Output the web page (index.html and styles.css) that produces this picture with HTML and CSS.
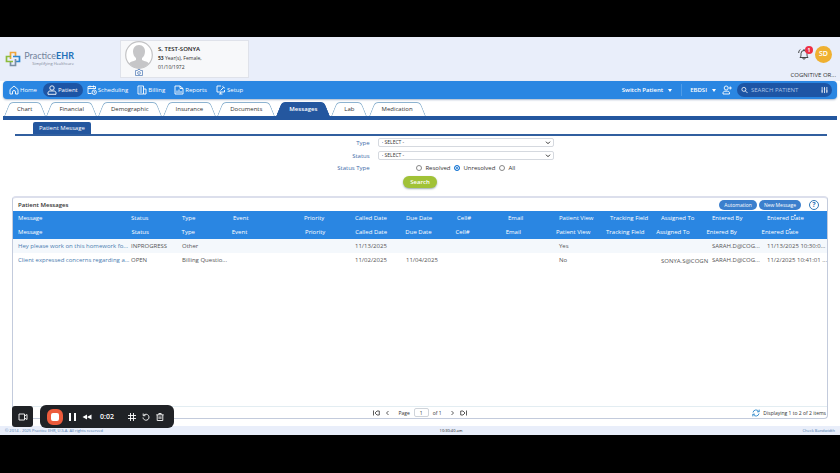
FILE: index.html
```html
<!DOCTYPE html>
<html lang="en">
<head>
    <meta charset="UTF-8">
    <meta name="viewport" content="width=device-width, initial-scale=1.0">
    <title>Practice EHR - Patient Messages</title>
    <link rel="stylesheet" href="styles.css">
</head>
<body>
    <div class="app">
        <header class="header">
            <a href="#" class="logo">
                <svg class="logo-mark" viewBox="0 0 16 16" fill="none" stroke-width="1.7">
                    <path d="M5.5 8V1.500h5V6" stroke="#f0a63a"/>
                    <path d="M8 5.500h6.500v5H10" stroke="#2d86cf"/>
                    <path d="M10.500 8v6.500h-5V10" stroke="#7b8fa3"/>
                    <path d="M8 10.500H1.500v-5H6" stroke="#8dbb3c"/>
                </svg>
                <span class="logo-text">
                    <span class="logo-name">Practice<b>EHR</b></span>
                    <span class="logo-tag">Simplifying Healthcare</span>
                </span>
            </a>
            <div class="patient-card">
                <div class="photo">
                    <svg class="avatar" viewBox="0 0 28 28">
                        <circle cx="14" cy="14" r="13.300" fill="#fff" stroke="#c3c3c5" stroke-width="1.200"/>
                        <path d="M14 4c4 0 6 3 6 6.500 0 2.500-1 5-3 6.500v2c3 1.500 5.500 1.500 7 3.500a13 13 0 0 1-20 0c1.500-2 4-2 7-3.500v-2c-2-1.500-3-4-3-6.500C8 7 10 4 14 4z" fill="#c6c6c8"/>
                    </svg>
                    <svg class="camera" viewBox="0 0 8 7" fill="none" stroke="#5f87bd" stroke-width=".8">
                        <path d="M.5 1.500h2l.5-1h2l.5 1h2v5h-7z"/>
                        <circle cx="4" cy="4" r="1.400"/>
                    </svg>
                </div>
                <div class="patient-info">
                    <div class="patient-name">S, TEST-SONYA</div>
                    <div><b>53</b> Year(s), Female,</div>
                    <div>01/10/1972</div>
                </div>
            </div>
            <div class="account">
                <div class="account-icons">
                    <button type="button" class="bell" aria-label="Notifications">
                        <svg viewBox="0 0 12 12" fill="none" stroke="#333" stroke-width=".9">
                            <path d="M2 9.500c1-1 1-2 1-4a3 3 0 0 1 6 0c0 2 0 3 1 4zM4.700 10c.3 1.600 2.300 1.600 2.600 0M6 2.500V1M.7 5c0-1.500.5-2.500 1.500-3.500"/>
                        </svg>
                        <span class="badge">1</span>
                    </button>
                    <button type="button" class="user">SD</button>
                </div>
                <div class="company">COGNITIVE OR...</div>
            </div>
        </header>

        <nav class="navbar">
            <a href="#" class="nav-item">
                <svg viewBox="0 0 10 10"><path d="M1 4.500L5 1l4 3.500V9H6.500V7a1.500 1.500 0 0 0-3 0v2H1z"/></svg>Home
            </a>
            <a href="#" class="nav-item active">
                <svg viewBox="0 0 10 10"><circle cx="5" cy="3" r="2.200"/><path d="M1 9.300V8c0-1.300 1-2 2-2h4c1 0 2 .7 2 2v1.300z"/></svg>Patient
            </a>
            <a href="#" class="nav-item">
                <svg viewBox="0 0 10 10"><path d="M4.500 8.500H1v-7h7.500V4M1 3.500h7.500M3 .5v2M6.500.5v2"/><circle cx="7.200" cy="7.200" r="2.200"/><path d="M7.200 6v1.300h1"/></svg>Scheduling
            </a>
            <a href="#" class="nav-item">
                <svg viewBox="0 0 10 10"><path d="M1 1h5.500v8H1zM6.500 4H9v5H6.500M2.500 3h2.500M2.500 5h2.500M2.500 7h2.500"/></svg>Billing
            </a>
            <a href="#" class="nav-item">
                <svg viewBox="0 0 10 10"><path d="M1 1h5l3 2.500V9H1zM6 1v2.500h3M3 8V5.500M5 8V4.500M7 8V6"/></svg>Reports
            </a>
            <a href="#" class="nav-item">
                <svg viewBox="0 0 10 10"><path d="M5 1H1v6h7.500V5M3 9h3.500M4.700 7v2M4.500 5.500l3-3M7 .8a1.500 1.500 0 0 0 2 2"/></svg>Setup
            </a>
            <div class="nav-right">
                <button type="button" class="switch">Switch Patient <span class="caret"></span></button>
                <button type="button" class="practice">EBDSI <span class="caret"></span></button>
                <button type="button" class="add-user" aria-label="Add patient">
                    <svg viewBox="0 0 10 10"><circle cx="4.200" cy="3" r="2"/><path d="M1 9V8c0-1.200 1-1.800 2-1.800h2.500c1 0 2 .6 2 1.800v1zM8.300 1.500v3M6.800 3h3"/></svg>
                </button>
                <label class="search">
                    <svg viewBox="0 0 8 8"><circle cx="3.300" cy="3.300" r="2.300"/><path d="M5 5l2.500 2.500"/></svg>
                    <input type="text" placeholder="SEARCH PATIENT" aria-label="Search patient">
                    <svg viewBox="0 0 8 8"><path d="M1.300 .5v7M4 .5v7M6.700 .5v7M.5 5.200h1.600M3.200 2.800h1.600M5.900 5.200h1.600"/></svg>
                </label>
            </div>
        </nav>

        <nav class="tabs">
            <a href="#" class="tab"><span>Chart</span></a>
            <a href="#" class="tab"><span>Financial</span></a>
            <a href="#" class="tab"><span>Demographic</span></a>
            <a href="#" class="tab"><span>Insurance</span></a>
            <a href="#" class="tab"><span>Documents</span></a>
            <a href="#" class="tab selected"><span>Messages</span></a>
            <a href="#" class="tab"><span>Lab</span></a>
            <a href="#" class="tab"><span>Medication</span></a>
        </nav>

        <div class="subtabs">
            <a href="#" class="subtab">Patient Message</a>
        </div>

        <form class="filter">
            <label for="type">Type</label>
            <select id="type"><option>- SELECT -</option></select>
            <label for="status">Status</label>
            <select id="status"><option>- SELECT -</option></select>
            <span class="label">Status Type</span>
            <div class="radios">
                <label><input type="radio" name="statusType">Resolved</label>
                <label><input type="radio" name="statusType" checked>Unresolved</label>
                <label><input type="radio" name="statusType">All</label>
            </div>
            <button type="button" class="search-button">Search</button>
        </form>

        <main class="panel">
            <div class="panel-title">
                <h1>Patient Messages</h1>
                <button type="button" class="pill">Automation</button>
                <button type="button" class="pill">New Message</button>
                <button type="button" class="help" aria-label="Help">?</button>
            </div>

            <table class="grid grid-head">
                <colgroup>
                    <col class="w-message"><col class="w-col"><col class="w-col"><col class="w-event"><col class="w-col"><col class="w-col"><col class="w-col"><col class="w-col"><col class="w-col"><col class="w-col"><col class="w-col"><col class="w-col"><col class="w-by"><col class="w-date">
                </colgroup>
                <tr>
                    <th>Message</th><th>Status</th><th>Type</th><th>Event</th><th>Priority</th><th>Called Date</th><th>Due Date</th><th>Cell#</th><th>Email</th><th>Patient View</th><th>Tracking Field</th><th>Assigned To</th><th>Entered By</th><th class="sorted">Entered Date</th>
                </tr>
            </table>
            <table class="grid grid-head grid-scroll">
                <colgroup>
                    <col class="w-message"><col class="w-col"><col class="w-col"><col class="w-event"><col class="w-col"><col class="w-col"><col class="w-col"><col class="w-col"><col class="w-col"><col class="w-col"><col class="w-col"><col class="w-col"><col class="w-by"><col class="w-date">
                </colgroup>
                <tr>
                    <th>Message</th><th>Status</th><th>Type</th><th>Event</th><th>Priority</th><th>Called Date</th><th>Due Date</th><th>Cell#</th><th>Email</th><th>Patient View</th><th>Tracking Field</th><th>Assigned To</th><th>Entered By</th><th class="sorted">Entered Date</th>
                </tr>
            </table>
            <table class="grid grid-body">
                <colgroup>
                    <col class="w-message"><col class="w-col"><col class="w-col"><col class="w-event"><col class="w-col"><col class="w-col"><col class="w-col"><col class="w-col"><col class="w-col"><col class="w-col"><col class="w-col"><col class="w-col"><col class="w-by"><col class="w-date">
                </colgroup>
                <tr>
                    <td><a href="#">Hey please work on this homework fo...</a></td><td>INPROGRESS</td><td>Other</td><td></td><td></td><td>11/13/2025</td><td></td><td></td><td></td><td>Yes</td><td></td><td></td><td>SARAH.D@COG...</td><td>11/13/2025 10:30:0...</td>
                </tr>
                <tr>
                    <td><a href="#">Client expressed concerns regarding a...</a></td><td>OPEN</td><td>Billing Questio...</td><td></td><td></td><td>11/02/2025</td><td>11/04/2025</td><td></td><td></td><td>No</td><td></td><td class="assigned">SONYA.S@COGN</td><td>SARAH.D@COG...</td><td>11/2/2025 10:41:01 ...</td>
                </tr>
            </table>

            <div class="pager">
                <div class="pages">
                    <button type="button" aria-label="First page"><svg viewBox="0 0 7 6"><path d="M.5.500v5M4 1L2 3l2 2M4 1h2.300v4H4"/></svg></button>
                    <button type="button" aria-label="Previous page"><svg viewBox="0 0 7 6"><path d="M4.500 1l-2 2 2 2"/></svg></button>
                    <label for="page">Page</label>
                    <input type="text" id="page" value="1">
                    <span>of 1</span>
                    <button type="button" aria-label="Next page"><svg viewBox="0 0 7 6"><path d="M2.500 1l2 2-2 2"/></svg></button>
                    <button type="button" aria-label="Last page"><svg viewBox="0 0 7 6"><path d="M6.500.500v5M3 1l2 2-2 2M3 1H.7v4H3"/></svg></button>
                </div>
                <div class="count">
                    <svg viewBox="0 0 8 8"><path d="M1 3.500A3.100 3.100 0 0 1 6.800 2.600M7.200.600v2.200H5M7 4.500A3.100 3.100 0 0 1 1.200 5.400M.8 7.400V5.200H3"/></svg>
                    Displaying 1 to 2 of 2 items
                </div>
            </div>
        </main>

        <footer class="footer">
            <span>© 2014 - 2025 Practice EHR, U.S.A. All rights reserved</span>
            <span class="clock">10:30:40 am</span>
            <a href="#">Check Bandwidth</a>
        </footer>
    </div>

    <div class="recorder">
        <button type="button" class="rec-camera" aria-label="Camera">
            <svg viewBox="0 0 10 8"><path d="M1 1h5.500v6H1zM6.500 3L9 1.500v5L6.500 5"/></svg>
        </button>
        <div class="rec-bar">
            <button type="button" class="rec-stop" aria-label="Stop"></button>
            <button type="button" class="rec-pause" aria-label="Pause"></button>
            <button type="button" aria-label="Rewind"><svg class="solid" viewBox="0 0 9 8"><path d="M4.500 1.500v5L0 4zM9 1.500v5L4.500 4z"/></svg></button>
            <span class="rec-time">0:02</span>
            <button type="button" aria-label="Grid"><svg viewBox="0 0 8 8"><path d="M2.500 0v8M5.500 0v8M0 2.500h8M0 5.500h8"/></svg></button>
            <button type="button" aria-label="Restart"><svg viewBox="0 0 8 8"><path d="M1.800 2.200A3 3 0 1 1 1 4.500M1.200.500v2.200h2.200"/></svg></button>
            <button type="button" aria-label="Delete"><svg viewBox="0 0 8 8"><path d="M.3 1.800h7.400M2.800 1.500V.500h2.400v1M1.200 2v5.500h5.600V2M3.100 3.300v2.700M4.900 3.300v2.700"/></svg></button>
        </div>
    </div>
</body>
</html>
```

FILE: styles.css
```css
* {
    box-sizing: border-box;
}
body {
    margin: 0;
    height: 100vh;
    padding: 37px 0 38px;
    background-color: #000;
    color: #333;
    font-family: "Open Sans", "Noto Sans", sans-serif;
    font-size: 6px;
    line-height: 8px;
}
button, input, select {
    font: inherit;
    color: inherit;
    margin: 0;
    padding: 0;
    border: none;
    background: none;
}
button {
    display: flex;
    align-items: center;
    justify-content: center;
    cursor: pointer;
}
a {
    color: inherit;
    text-decoration: none;
}
svg {
    flex: none;
}
.app {
    display: flex;
    flex-direction: column;
    height: 100%;
    background-color: #fff;
}

/* Header */
.header {
    display: flex;
    align-items: center;
    height: 44px;
    padding: 0 4px 0 5px;
    background-color: #e9eefa;
}
.logo {
    display: flex;
    align-items: center;
    width: 115px;
}
.logo-mark {
    width: 16px;
    height: 16px;
}
.logo-text {
    display: flex;
    flex-direction: column;
    align-items: flex-end;
    width: 53px;
}
.logo-name {
    color: #72829a;
    font-family: Lato, sans-serif;
    font-size: 9px;
    line-height: 10px;
    white-space: nowrap;
}
.logo-name b {
    color: #2271b8;
}
.logo-tag {
    color: #7d8696;
    font-size: 4px;
    line-height: 6px;
    white-space: nowrap;
}
.patient-card {
    display: flex;
    width: 129px;
    height: 38px;
    padding: 0 4px;
    gap: 5px;
    background-color: #f7f8fa;
    border: 1px solid #dfe2ea;
}
.photo {
    display: flex;
    flex-direction: column;
    align-items: center;
}
.avatar {
    width: 28px;
    height: 28px;
}
.camera {
    width: 8px;
    height: 7px;
}
.patient-info {
    padding-top: 4px;
    font-size: 5px;
    line-height: 9px;
}
.patient-name {
    color: #222;
    font-size: 6px;
    font-weight: 600;
}
.account {
    display: flex;
    flex-direction: column;
    align-items: flex-end;
    gap: 8px;
    margin-left: auto;
    padding-top: 6px;
}
.account-icons {
    display: flex;
    align-items: center;
    gap: 2px;
    padding-right: 4px;
}
.bell {
    position: relative;
    width: 15px;
    height: 12px;
    justify-content: flex-start;
}
.bell svg {
    width: 12px;
    height: 12px;
}
.badge {
    position: absolute;
    top: -2px;
    right: 0;
    width: 8px;
    height: 8px;
    border-radius: 50%;
    background-color: #ee2f45;
    color: #fff;
    font-size: 5px;
    font-weight: bold;
}
.user {
    width: 17px;
    height: 17px;
    border-radius: 50%;
    background-color: #efb031;
    color: #fff;
    font-size: 7px;
    font-weight: 600;
}

/* Main navigation */
.navbar {
    display: flex;
    align-items: center;
    height: 18px;
    margin: 0 3px;
    padding: 0 5px 0 2px;
    border-radius: 4px;
    background-color: #2a86e2;
    color: #fff;
    box-shadow: 0 1px 2px #aab8cc;
}
.navbar svg {
    fill: none;
    stroke: #fff;
    stroke-width: 0.9;
}
.nav-item {
    display: flex;
    align-items: center;
    height: 14px;
    padding: 0 5px 0 4px;
    gap: 1px;
    border-radius: 7px;
}
.nav-item svg,
.add-user svg {
    width: 10px;
    height: 10px;
}
.nav-item.active {
    margin-left: 1px;
    background-color: #1d55a5;
}
.nav-right {
    display: flex;
    align-items: center;
    margin-left: auto;
}
.switch,
.practice {
    gap: 5px;
    height: 12px;
    font-weight: 600;
}
.switch {
    padding-right: 9px;
    border-right: 1px solid #4f9ce8;
}
.practice {
    padding: 0 6px 0 8px;
}
.caret {
    border: 2px solid transparent;
    border-top: 3px solid #fff;
    border-bottom: none;
}
.search {
    display: flex;
    align-items: center;
    gap: 3px;
    width: 95px;
    height: 14px;
    margin-left: 5px;
    padding: 0 4px;
    border-radius: 7px;
    background-color: #1d55a5;
}
.search svg {
    width: 7px;
    height: 8px;
}
.search input {
    flex: 1;
    min-width: 0;
    height: 8px;
}
.search input::placeholder {
    color: #a9c4e8;
}

/* Chart tabs */
.tabs {
    display: flex;
    gap: 3px;
    margin: 3px 3px 0;
    padding: 0 2px;
    border-bottom: 4px solid #24579f;
}
.tab {
    position: relative;
    height: 14px;
    padding: 0 12px;
    line-height: 14px;
}
.tab span {
    position: relative;
    z-index: 1;
}
.tab::before,
.tab::after {
    content: "";
    position: absolute;
    top: 0;
    bottom: 0;
    border-top: 1px solid #8db3d0;
    transform-origin: bottom;
}
.tab::before {
    left: -1px;
    right: 50%;
    border-left: 1px solid #8db3d0;
    border-top-left-radius: 4px;
    transform: skewX(-22deg);
}
.tab::after {
    left: 50%;
    right: -1px;
    border-right: 1px solid #8db3d0;
    border-top-right-radius: 4px;
    transform: skewX(22deg);
}
.tab.selected {
    color: #fff;
    font-weight: 600;
}
.tab.selected::before,
.tab.selected::after {
    background-color: #24579f;
    border-color: #24579f;
}
.subtabs {
    display: flex;
    margin: 2px 13px 0 15px;
    padding-left: 18px;
    border-bottom: 2px solid #315f9f;
}
.subtab {
    height: 12px;
    padding: 0 6px;
    line-height: 12px;
    border-radius: 2px 2px 0 0;
    background-color: #24579f;
    color: #fff;
}

/* Search form */
.filter {
    display: grid;
    grid-template-columns: 44% 21% 1fr;
    column-gap: 8px;
    row-gap: 4px;
    align-items: center;
    padding-top: 2px;
}
.filter > label,
.label {
    grid-column: 1;
    color: #3d6aa8;
    text-align: right;
}
.filter select {
    grid-column: 2;
    height: 9px;
    padding: 0 3px;
    border: 1px solid #d5d9df;
    border-radius: 2px;
    appearance: none;
    background: #fff url("data:image/svg+xml,%3Csvg xmlns='http://www.w3.org/2000/svg' viewBox='0 0 6 4'%3E%3Cpath d='M1 .7l2 2 2-2' fill='none' stroke='%23333'/%3E%3C/svg%3E") no-repeat right 2px center / 6px 4px;
    font-size: 5px;
    line-height: 7px;
}
.radios {
    display: flex;
    grid-column: 2;
    justify-content: center;
    gap: 4px;
}
.radios label {
    display: flex;
    align-items: center;
    gap: 3px;
}
.radios input {
    width: 6px;
    height: 6px;
    appearance: none;
    border: 1px solid #888;
    border-radius: 50%;
    background-color: #fff;
}
.radios input:checked {
    border-color: #1877d4;
    background-color: #1877d4;
    box-shadow: inset 0 0 0 1px #fff;
}
.search-button {
    grid-column: 1 / -1;
    justify-self: center;
    width: 34px;
    height: 12px;
    border-radius: 6px;
    background-color: #a1c237;
    color: #fff;
    font-weight: 600;
    box-shadow: 0 1px 2px #9aa;
}

/* Messages panel */
.panel {
    display: flex;
    flex: 1;
    flex-direction: column;
    margin: 8px 12px 7px;
    border: 1px solid #c3cbdc;
    border-top: 2px solid #dcdfec;
    border-radius: 4px;
}
.panel-title {
    display: flex;
    align-items: center;
    gap: 2px;
    height: 13px;
    padding: 0 8px 0 5px;
}
.panel-title h1 {
    margin: 0 auto 0 0;
    font-size: 6px;
    font-weight: 600;
}
.pill {
    height: 10px;
    padding: 0 5px;
    border-radius: 5px;
    background-color: #3b7fcd;
    color: #fff;
    font-size: 5px;
}
.help {
    width: 10px;
    height: 10px;
    margin-left: 6px;
    border: 1px solid #2f78b8;
    border-radius: 50%;
    color: #2f78b8;
    font-size: 7px;
    font-weight: bold;
}
.grid {
    width: 100%;
    table-layout: fixed;
    border-collapse: collapse;
}
.w-message {
    width: 113px;
}
.w-col {
    width: 51px;
}
.w-event {
    width: 71px;
}
.w-by {
    width: 55px;
}
.w-date {
    width: 65px;
}
.grid-scroll .w-col {
    width: 50px;
}
.grid-scroll .w-event {
    width: 73px;
}
.grid-scroll .w-date {
    width: 70px;
}
.grid th,
.grid td {
    height: 14px;
    padding: 0 0 0 5px;
    text-align: left;
    white-space: nowrap;
}
.grid th {
    background-color: #2a86e2;
    color: #fff;
    font-weight: normal;
}
.sorted {
    position: relative;
}
.sorted::after {
    content: "";
    position: absolute;
    top: 3px;
    left: 32px;
    border: 1px solid transparent;
    border-top: none;
    border-bottom: 2px solid #fff;
}
.grid td {
    color: #555;
}
.grid td:first-child {
    color: #4a7cb0;
}
.grid tr:first-child td {
    background-color: #f4f8fc;
}
.grid td.assigned {
    padding-top: 2px;
}
.pager {
    display: grid;
    grid-template-columns: 1fr auto 1fr;
    align-items: center;
    height: 12px;
    margin-top: auto;
    border-top: 1px solid #e3edf2;
    font-size: 5px;
}
.pages {
    display: flex;
    grid-column: 2;
    align-items: center;
    gap: 4px;
}
.pages svg {
    width: 7px;
    height: 6px;
    fill: none;
    stroke: #333;
    stroke-width: 0.8;
}
.pages label {
    padding-left: 3px;
}
.pages input {
    width: 15px;
    height: 9px;
    border: 1px solid #cfd4da;
    border-radius: 2px;
    text-align: center;
}
.pages span {
    padding-right: 3px;
}
.count {
    display: flex;
    align-items: center;
    justify-content: flex-end;
    gap: 3px;
    padding-right: 1px;
}
.count svg {
    width: 8px;
    height: 8px;
    fill: none;
    stroke: #2a86c8;
    stroke-width: 0.9;
}
.footer {
    display: grid;
    grid-template-columns: 52% 1fr auto;
    align-items: center;
    height: 9px;
    padding: 0 5px;
    background-color: #e9eefa;
    color: #4a7cb0;
    font-size: 4px;
}
.clock {
    padding-left: 3px;
    color: #222;
}

/* Screen recorder controls */
.recorder {
    position: fixed;
    left: 12px;
    bottom: 45px;
    display: flex;
    align-items: center;
    gap: 7px;
}
.recorder svg {
    width: 8px;
    height: 8px;
    fill: none;
    stroke: #fff;
    stroke-width: 0.9;
}
.recorder .rec-camera svg,
.recorder .solid {
    width: 10px;
}
.recorder .solid {
    fill: #fff;
    stroke: none;
}
.rec-camera {
    width: 21px;
    height: 21px;
    border-radius: 3px;
    background-color: #202226;
}
.rec-bar {
    display: flex;
    align-items: center;
    gap: 6px;
    height: 23px;
    padding: 0 10px 0 7px;
    border-radius: 6px;
    background-color: #202226;
}
.rec-stop {
    width: 16px;
    height: 16px;
    border: 4px solid #ed5b3c;
    border-radius: 6px;
    background-color: #fff;
}
.rec-pause {
    width: 7px;
    height: 8px;
    border: solid #fff;
    border-width: 0 2px;
}
.rec-time {
    padding: 0 8px 0 2px;
    color: #fff;
    font-size: 7px;
    font-weight: 600;
}
```
